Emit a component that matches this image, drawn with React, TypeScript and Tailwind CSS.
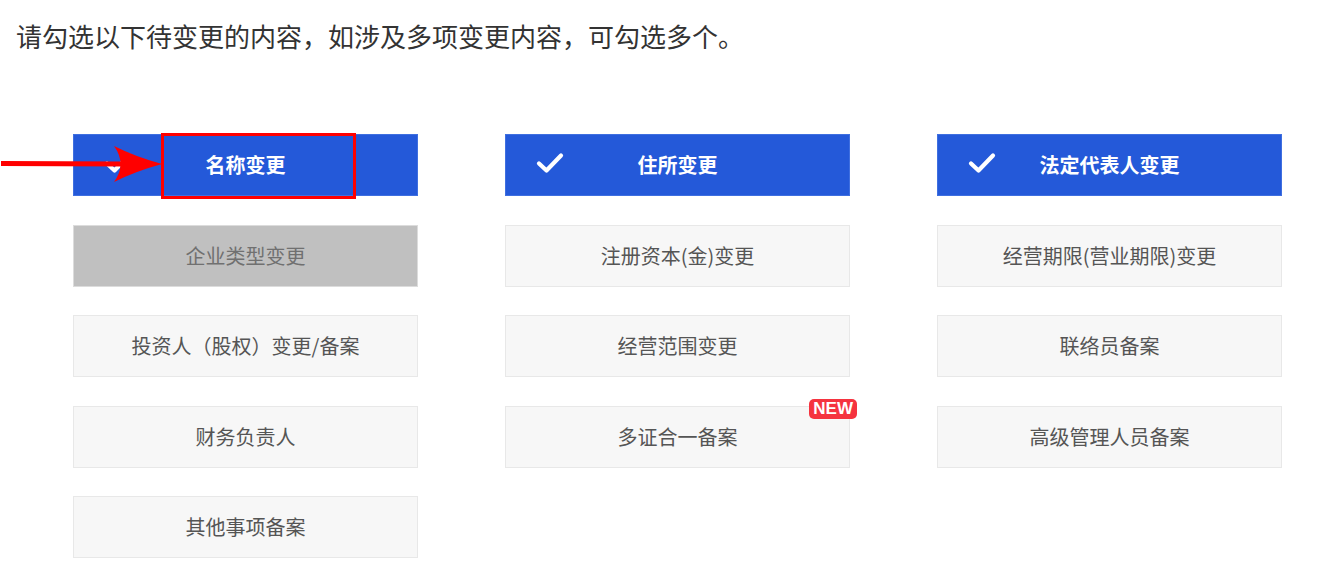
import React from "react";

type Item = {
  label: string;
  state?: "checked" | "disabled";
  isNew?: boolean;
  marked?: boolean;
};

const items: Item[] = [
  { label: "名称变更", state: "checked", marked: true },
  { label: "住所变更", state: "checked" },
  { label: "法定代表人变更", state: "checked" },
  { label: "企业类型变更", state: "disabled" },
  { label: "注册资本(金)变更" },
  { label: "经营期限(营业期限)变更" },
  { label: "投资人（股权）变更/备案" },
  { label: "经营范围变更" },
  { label: "联络员备案" },
  { label: "财务负责人" },
  { label: "多证合一备案", isNew: true },
  { label: "高级管理人员备案" },
  { label: "其他事项备案" },
];

function Check() {
  return (
    <svg width="28" height="22" viewBox="0 0 28 22" className="absolute left-[30px] top-[17px]">
      <path d="M3 11.5 L10.5 18.5 L25 3.5" fill="none" stroke="#fff" strokeWidth="4.2" strokeLinecap="round" strokeLinejoin="round" />
    </svg>
  );
}

function Card({ item }: { item: Item }) {
  if (item.state === "checked") {
    return (
      <div className="relative flex h-[62px] items-center justify-center border border-[#3f6fe0] bg-[#2459d9] text-[20px] font-bold text-white">
        <Check />
        {item.label}
        {item.marked && (
          <>
            <div className="absolute left-[87px] top-[-2px] h-[66px] w-[195px] border-[3px] border-[#ff0000]" />
            <svg width="165" height="44" viewBox="0 0 165 44" className="absolute left-[-73px] top-[7px]">
              <line x1="0" y1="21.5" x2="125" y2="22" stroke="#ff0000" strokeWidth="5" />
              <path d="M161 22 Q135 15 113 4 Q126 22 113 40 Q135 29 161 22 Z" fill="#ff0000" />
            </svg>
          </>
        )}
      </div>
    );
  }
  if (item.state === "disabled") {
    return (
      <div className="flex h-[62px] items-center justify-center border border-[#dcdcdc] bg-[#c0c0c0] text-[20px] text-[#707070]">
        {item.label}
      </div>
    );
  }
  return (
    <div className="relative flex h-[62px] items-center justify-center border border-[#e8e8e8] bg-[#f7f7f7] text-[20px] text-[#555]">
      {item.label}
      {item.isNew && (
        <span className="absolute right-[-8px] top-[-8px] rounded-[5px] bg-[#f5333f] px-[4px] text-[17px] font-black leading-[20px] text-white" style={{ fontFamily: '"Liberation Sans", Arial, sans-serif' }}>
          NEW
        </span>
      )}
    </div>
  );
}

export default function App() {
  return (
    <div className="min-h-screen bg-white pl-[16px]" style={{ fontFamily: '"Noto Sans CJK SC", "Noto Sans", sans-serif' }}>
      <p className="pt-[18px] text-[26px] leading-[36px] text-[#333]">请勾选以下待变更的内容，如涉及多项变更内容，可勾选多个。</p>
      <div className="ml-[57px] mt-[80px] grid w-[1209px] grid-cols-3 gap-x-[87px] gap-y-[28.5px]">
        {items.map(item => (
          <Card key={item.label} item={item} />
        ))}
      </div>
    </div>
  );
}
